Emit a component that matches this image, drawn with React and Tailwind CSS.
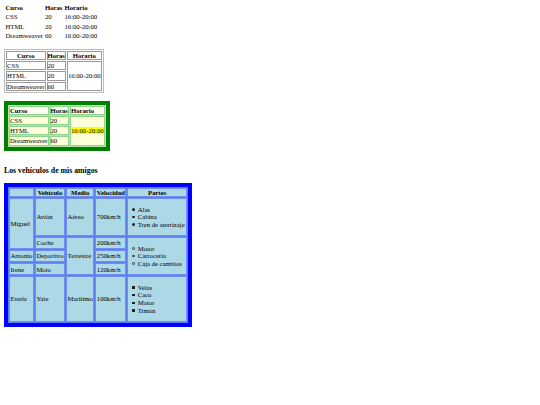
import React from 'react';

const font = { fontFamily: '"Liberation Serif", "Times New Roman", serif' };

const PlainTable = () => (
  <table className="border-separate border-spacing-[1px] text-[6.7px] leading-[7.5px]">
    <thead>
      <tr>
        <th className="p-[0.5px] text-left font-bold">Curso</th>
        <th className="p-[0.5px] text-left font-bold">Horas</th>
        <th className="p-[0.5px] text-left font-bold">Horario</th>
      </tr>
    </thead>
    <tbody>
      {[['CSS', '20'], ['HTML', '20'], ['Dreamweaver', '60']].map(([c, h]) => (
        <tr key={c}>
          <td className="p-[0.5px]">{c}</td>
          <td className="p-[0.5px]">{h}</td>
          <td className="p-[0.5px]">16:00-20:00</td>
        </tr>
      ))}
    </tbody>
  </table>
);

const bc = 'border border-[#9a9a9a] p-0';

const BorderTable = () => (
  <table className="border-separate border-spacing-[1px] border border-[#bcbcbc] text-[6.7px] leading-[7.2px]">
    <thead>
      <tr>
        <th className={`${bc} font-bold`}>Curso</th>
        <th className={`${bc} font-bold`}>Horas</th>
        <th className={`${bc} font-bold`}>Horario</th>
      </tr>
    </thead>
    <tbody>
      <tr>
        <td className={bc}>CSS</td>
        <td className={bc}>20</td>
        <td rowSpan={3} className={bc}>16:00-20:00</td>
      </tr>
      <tr>
        <td className={bc}>HTML</td>
        <td className={bc}>20</td>
      </tr>
      <tr>
        <td className={bc}>Dreamweaver</td>
        <td className={bc}>60</td>
      </tr>
    </tbody>
  </table>
);

const gc = 'border border-[#8fd48f] bg-[#ffffd8] p-0';

const GreenTable = () => (
  <table className="border-separate border-spacing-[1px] border-[4px] border-[#008000] bg-[#b4e4a8] text-[6.7px] leading-[7.2px]">
    <thead>
      <tr>
        {['Curso', 'Horas', 'Horario'].map((h) => (
          <th key={h} className={`${gc} bg-[#fffff2] text-left font-bold`}>{h}</th>
        ))}
      </tr>
    </thead>
    <tbody>
      <tr>
        <td className={gc}>CSS</td>
        <td className={gc}>20</td>
        <td rowSpan={3} className={gc}>
          <span className="bg-[#ffff00]">16:00-20:00</span>
        </td>
      </tr>
      <tr>
        <td className={gc}>HTML</td>
        <td className={gc}>20</td>
      </tr>
      <tr>
        <td className={gc}>Dreamweaver</td>
        <td className={gc}>60</td>
      </tr>
    </tbody>
  </table>
);

const cell = 'border border-[#6f8ff0] bg-[#add8e6] px-[0.5px] py-0';

const marks = {
  disc: 'rounded-full bg-[#222]',
  circle: 'rounded-full border-[0.6px] border-[#333]',
  square: 'bg-[#222]',
};

const Parts = ({ items, type }) => (
  <ul className="my-[6.7px] mr-[1px] pl-[3.5px] leading-[7.6px]">
    {items.map((i) => (
      <li key={i} className="flex items-center gap-[3px]">
        <span className={`h-[2.4px] w-[2.4px] shrink-0 ${marks[type]}`} />
        <span>{i}</span>
      </li>
    ))}
  </ul>
);

const CarTable = () => (
  <table className="border-separate border-spacing-[1px] border-[4px] border-[#0000ff] bg-[#5b7df5] text-[6.7px] leading-[7.2px]">
    <thead>
      <tr>
        <th className={`${cell} font-bold`}></th>
        <th className={`${cell} font-bold`}>Vehículo</th>
        <th className={`${cell} font-bold`}>Medio</th>
        <th className={`${cell} font-bold`}>Velocidad</th>
        <th className={`${cell} font-bold`}>Partes</th>
      </tr>
    </thead>
    <tbody>
      <tr>
        <td rowSpan={2} className={cell}>Miguel</td>
        <td className={cell}>Avión</td>
        <td className={cell}>Aéreo</td>
        <td className={cell}>700km/h</td>
        <td className={cell}>
          <Parts type="disc" items={['Alas', 'Cabina', 'Tren de aterrizaje']} />
        </td>
      </tr>
      <tr>
        <td className={cell}>Coche</td>
        <td rowSpan={3} className={cell}>Terrestre</td>
        <td className={cell}>200km/h</td>
        <td rowSpan={3} className={cell}>
          <Parts type="circle" items={['Motor', 'Carrocería', 'Caja de cambios']} />
        </td>
      </tr>
      <tr>
        <td className={cell}>Antonio</td>
        <td className={cell}>Deportivo</td>
        <td className={cell}>250km/h</td>
      </tr>
      <tr>
        <td className={cell}>Irene</td>
        <td className={cell}>Moto</td>
        <td className={cell}>120km/h</td>
      </tr>
      <tr>
        <td className={cell}>Estela</td>
        <td className={cell}>Yate</td>
        <td className={cell}>Marítimo</td>
        <td className={cell}>100km/h</td>
        <td className={cell}>
          <Parts type="square" items={['Velas', 'Caco', 'Motor', 'Timón']} />
        </td>
      </tr>
    </tbody>
  </table>
);

export default function App() {
  return (
    <div className="min-h-[405px] w-[540px] bg-white px-[4px] pt-[2px] text-black" style={font}>
      <PlainTable />
      <div className="h-[8px]" />
      <BorderTable />
      <div className="h-[8px]" />
      <GreenTable />
      <h3 className="mt-[15px] mb-[8px] text-[7.8px] font-bold leading-[9px]">Los vehículos de mis amigos</h3>
      <CarTable />
    </div>
  );
}
